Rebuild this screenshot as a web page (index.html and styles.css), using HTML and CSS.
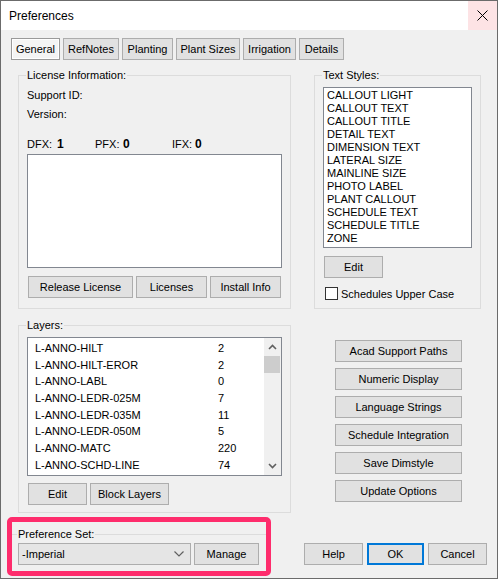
FILE: index.html
```html
<!DOCTYPE html>
<html>
<head>
<meta charset="utf-8">
<link rel="stylesheet" href="styles.css">
</head>
<body>
<div class="window">
  <div class="titlebar">
    <span class="title">Preferences</span>
    <div class="close">
      <svg width="11" height="11" viewBox="0 0 11 11"><path d="M0.5 0.5 L10.5 10.5 M10.5 0.5 L0.5 10.5" stroke="#000" stroke-width="1" fill="none"/></svg>
    </div>
  </div>
  <div class="body">
    <div class="tabs">
      <div class="tab active t-general">General</div>
      <div class="tab t-refnotes">RefNotes</div>
      <div class="tab t-planting">Planting</div>
      <div class="tab t-sizes">Plant Sizes</div>
      <div class="tab t-irrigation">Irrigation</div>
      <div class="tab t-details">Details</div>
    </div>

    <div class="main">
      <div class="col">
        <div class="group group-license">
          <div class="legend">License Information:</div>
          <div class="info first">Support ID:</div>
          <div class="info">Version:</div>
          <div class="fx">
            <div class="fx-item fx-d"><span class="fx-label">DFX:</span><b>1</b></div>
            <div class="fx-item fx-p"><span class="fx-label">PFX:</span><b>0</b></div>
            <div class="fx-item fx-i"><span class="fx-label">IFX:</span><b>0</b></div>
          </div>
          <div class="whitebox"></div>
          <div class="btnrow">
            <div class="btn b-release">Release License</div>
            <div class="btn b-licenses">Licenses</div>
            <div class="btn b-install">Install Info</div>
          </div>
        </div>

        <div class="group group-layers">
          <div class="legend">Layers:</div>
          <div class="layers">
            <div class="rows">
              <div class="row"><span class="lname">L-ANNO-HILT</span><span>2</span></div>
              <div class="row"><span class="lname">L-ANNO-HILT-EROR</span><span>2</span></div>
              <div class="row"><span class="lname">L-ANNO-LABL</span><span>0</span></div>
              <div class="row"><span class="lname">L-ANNO-LEDR-025M</span><span>7</span></div>
              <div class="row"><span class="lname">L-ANNO-LEDR-035M</span><span>11</span></div>
              <div class="row"><span class="lname">L-ANNO-LEDR-050M</span><span>5</span></div>
              <div class="row"><span class="lname">L-ANNO-MATC</span><span>220</span></div>
              <div class="row"><span class="lname">L-ANNO-SCHD-LINE</span><span>74</span></div>
            </div>
            <div class="scrollbar">
              <div class="sb-btn"><svg width="9" height="6" viewBox="0 0 9 6"><path d="M1 5 L4.5 1.5 L8 5" stroke="#606060" stroke-width="1.6" fill="none"/></svg></div>
              <div class="sb-thumb"></div>
              <div class="sb-track"></div>
              <div class="sb-btn"><svg width="9" height="6" viewBox="0 0 9 6"><path d="M1 1 L4.5 4.5 L8 1" stroke="#606060" stroke-width="1.6" fill="none"/></svg></div>
            </div>
          </div>
          <div class="btnrow btnrow-layers">
            <div class="btn b-edit">Edit</div>
            <div class="btn b-block">Block Layers</div>
          </div>
        </div>
      </div>

      <div class="col">
        <div class="group group-text">
          <div class="legend">Text Styles:</div>
          <div class="stylelist">
            <div class="sitem">CALLOUT LIGHT</div>
            <div class="sitem">CALLOUT TEXT</div>
            <div class="sitem">CALLOUT TITLE</div>
            <div class="sitem">DETAIL TEXT</div>
            <div class="sitem">DIMENSION TEXT</div>
            <div class="sitem">LATERAL SIZE</div>
            <div class="sitem">MAINLINE SIZE</div>
            <div class="sitem">PHOTO LABEL</div>
            <div class="sitem">PLANT CALLOUT</div>
            <div class="sitem">SCHEDULE TEXT</div>
            <div class="sitem">SCHEDULE TITLE</div>
            <div class="sitem">ZONE</div>
          </div>
          <div class="btn b-edit b-edit-text">Edit</div>
          <div class="check">
            <span class="checkbox"></span>
            <span>Schedules Upper Case</span>
          </div>
        </div>

        <div class="side-btns">
          <div class="btn b-side">Acad Support Paths</div>
          <div class="btn b-side">Numeric Display</div>
          <div class="btn b-side">Language Strings</div>
          <div class="btn b-side">Schedule Integration</div>
          <div class="btn b-side">Save Dimstyle</div>
          <div class="btn b-side">Update Options</div>
        </div>
      </div>
    </div>

    <div class="footer">
      <div class="highlight">
        <div class="group group-pref">
          <div class="legend">Preference Set:</div>
          <div class="prefrow">
            <div class="combo">
              <span>-Imperial</span>
              <svg width="10" height="6" viewBox="0 0 10 6"><path d="M0.5 0.5 L5 5 L9.5 0.5" stroke="#606060" stroke-width="1.2" fill="none"/></svg>
            </div>
            <div class="btn b-manage">Manage</div>
          </div>
        </div>
      </div>
      <div class="dlg-btns">
        <div class="btn b-dlg">Help</div>
        <div class="btn b-dlg b-ok">OK</div>
        <div class="btn b-dlg">Cancel</div>
      </div>
    </div>
  </div>
</div>
</body>
</html>
```

FILE: styles.css
```css
* {
  box-sizing: border-box;
  margin: 0;
  padding: 0;
}

body {
  margin: 0;
  background: #ffffff;
  font-family: "Liberation Sans", Arial, sans-serif;
  font-size: 11px;
  color: #000;
}

.window {
  width: 498px;
  height: 579px;
  border: 1px solid #6b6b6b;
  background: #f0f0f0;
  display: flex;
  flex-direction: column;
}

.titlebar {
  height: 29px;
  background: #ffffff;
  display: flex;
  align-items: center;
  justify-content: space-between;
  flex-shrink: 0;
}

.title {
  padding-left: 8px;
  font-size: 12px;
}

.close {
  width: 29px;
  height: 29px;
  background: #fde3e5;
  display: flex;
  align-items: center;
  justify-content: center;
}

.body {
  padding: 8px 0 0 10px;
  display: flex;
  flex-direction: column;
}

.tabs {
  display: flex;
  gap: 3px;
  height: 22px;
}

.tab {
  height: 22px;
  border: 1px solid #adadad;
  background: #e1e1e1;
  display: flex;
  align-items: center;
  justify-content: center;
}

.tab.active {
  background: #f4f4f4;
  border-color: #9a9a9a;
  box-shadow: inset 0 0 0 1px #ffffff;
}

.t-general { width: 49px; }
.t-refnotes { width: 56px; }
.t-planting { width: 51px; }
.t-sizes { width: 64px; }
.t-irrigation { width: 53px; }
.t-details { width: 45px; }

.main {
  display: grid;
  grid-template-columns: 273px 167px;
  column-gap: 23px;
  margin-top: 15px;
  padding-left: 7px;
  align-items: start;
}

.col {
  display: flex;
  flex-direction: column;
  gap: 16px;
  align-items: flex-start;
}

.group {
  border: 1px solid #dcdcdc;
  padding: 0 8px;
  display: flex;
  flex-direction: column;
  align-items: flex-start;
}

.legend {
  margin-top: -8px;
  margin-left: -1px;
  height: 14px;
  line-height: 14px;
  padding: 0 1px;
  background: #f0f0f0;
  white-space: nowrap;
}

.group-license {
  width: 273px;
  padding-bottom: 10px;
}

.info {
  height: 19px;
  line-height: 19px;
}

.info.first {
  margin-top: 4px;
}

.fx {
  margin-top: 10px;
  height: 19px;
  display: grid;
  grid-template-columns: 68px 77px auto;
  align-items: center;
}

.fx-item {
  display: flex;
  align-items: center;
}

.fx-item b {
  font-size: 12px;
  font-weight: bold;
}

.fx-d .fx-label { width: 30px; }
.fx-p .fx-label { width: 28px; }
.fx-i .fx-label { width: 23px; }

.whitebox {
  margin-top: 1px;
  width: 255px;
  height: 114px;
  border: 1px solid #828790;
  background: #ffffff;
}

.btnrow {
  display: flex;
  gap: 3px;
  margin-top: 8px;
  margin-left: 1px;
}

.btn {
  height: 22px;
  border: 1px solid #adadad;
  background: #e1e1e1;
  display: flex;
  align-items: center;
  justify-content: center;
  white-space: nowrap;
}

.b-release { width: 105px; }
.b-licenses { width: 71px; }
.b-install { width: 71px; }
.b-edit { width: 59px; }
.b-block { width: 79px; }

.group-layers {
  width: 273px;
  padding-bottom: 7px;
}

.layers {
  margin-top: 5px;
  width: 255px;
  height: 139px;
  border: 1px solid #828790;
  background: #ffffff;
  display: flex;
}

.rows {
  flex: 1;
  padding-top: 2px;
  padding-left: 7px;
}

.row {
  height: 16.67px;
  line-height: 16.67px;
  display: flex;
  white-space: nowrap;
}

.lname {
  width: 183px;
}

.scrollbar {
  width: 17px;
  background: #f0f0f0;
  display: flex;
  flex-direction: column;
}

.sb-btn {
  height: 18px;
  display: flex;
  align-items: center;
  justify-content: center;
}

.sb-thumb {
  height: 17px;
  margin-right: 1px;
  background: #cdcdcd;
}

.sb-track {
  flex: 1;
}

.btnrow-layers {
  margin-top: 7px;
}

.group-text {
  width: 167px;
  padding-bottom: 8px;
}

.stylelist {
  margin-top: 5px;
  width: 149px;
  height: 161px;
  border: 1px solid #828790;
  background: #ffffff;
  padding: 1px 0 0 3px;
}

.sitem {
  height: 13px;
  line-height: 13px;
  white-space: nowrap;
}

.b-edit-text {
  margin-top: 8px;
  margin-left: 1px;
}

.check {
  margin-top: 9px;
  margin-left: 2px;
  height: 13px;
  display: flex;
  align-items: center;
  gap: 3px;
}

.checkbox {
  width: 13px;
  height: 13px;
  border: 1px solid #333333;
  background: #ffffff;
}

.side-btns {
  margin-top: 15px;
  margin-left: 21px;
  display: flex;
  flex-direction: column;
  gap: 6px;
}

.b-side {
  width: 127px;
}

.footer {
  margin-top: 4px;
  margin-left: -4px;
  display: flex;
  align-items: flex-end;
}

.highlight {
  width: 264px;
  height: 59px;
  border: 5px solid #fe2c6c;
  border-radius: 5px;
}

.group-pref {
  margin-top: 12px;
  border: none;
  border-top: 1px solid #dcdcdc;
  padding: 0 0 0 6px;
}

.prefrow {
  margin-top: 2px;
  display: flex;
  gap: 3px;
}

.combo {
  width: 173px;
  height: 22px;
  border: 1px solid #adadad;
  background: #e5e5e5;
  display: flex;
  align-items: center;
  justify-content: space-between;
  padding: 0 6px 0 3px;
}

.b-manage {
  width: 65px;
}

.dlg-btns {
  margin-left: 33px;
  margin-bottom: 11px;
  display: flex;
  gap: 4px;
}

.b-dlg {
  width: 59px;
}

.b-ok {
  width: 57px;
  border: 2px solid #0078d7;
}
```
